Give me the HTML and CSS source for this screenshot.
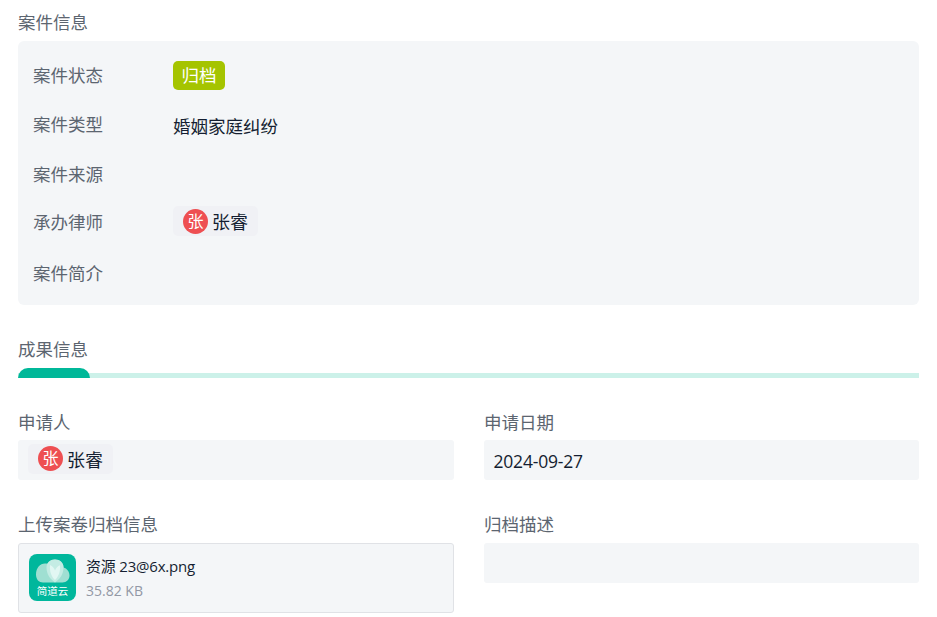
FILE: index.html
```html
<!DOCTYPE html>
<html lang="zh-CN">
<head>
    <meta charset="UTF-8">
    <title>案件信息</title>
    <link rel="stylesheet" href="styles.css">
</head>
<body>
<section class="case-section">
    <h2 class="section-title">案件信息</h2>
    <div class="case-panel">
        <div class="case-row">
            <span class="case-label label-up">案件状态</span>
            <span class="status-tag">归档</span>
        </div>
        <div class="case-row">
            <span class="case-label label-up">案件类型</span>
            <span class="case-value">婚姻家庭纠纷</span>
        </div>
        <div class="case-row">
            <span class="case-label">案件来源</span>
        </div>
        <div class="case-row">
            <span class="case-label label-up">承办律师</span>
            <span class="user-chip">
                <span class="user-avatar">张</span>
                <span class="user-name">张睿</span>
            </span>
        </div>
        <div class="case-row">
            <span class="case-label label-down">案件简介</span>
        </div>
    </div>
</section>

<section class="result-section">
    <h2 class="section-title">成果信息</h2>
    <div class="progress-track">
        <div class="progress-active"></div>
    </div>
    <div class="form-grid">
        <div class="form-item">
            <div class="form-label">申请人</div>
            <div class="form-box">
                <span class="user-chip">
                    <span class="user-avatar">张</span>
                    <span class="user-name">张睿</span>
                </span>
            </div>
        </div>
        <div class="form-item">
            <div class="form-label">申请日期</div>
            <div class="form-box date-box">2024-09-27</div>
        </div>
        <div class="form-item">
            <div class="form-label label-wide">上传案卷归档信息</div>
            <div class="file-card">
                <div class="file-logo">
                    <svg class="logo-cloud" width="34" height="26" viewBox="0 0 34 26">
                        <path d="M7 24.500C3 24.500 0 21.500 0 16.500 0 10 4 5.500 9 5.500 9.800 5.500 10.500 5.600 11.300 5.800 12.800 3.200 15.500 1.500 19 1.500 24 1.500 27.500 5 27.500 9.500 31 10.500 33.500 13.500 33.500 17.500 33.500 21.500 30.500 24.500 26.500 24.500Z" fill="#9fdfd2"/>
                        <path d="M19 24.500C14 21 10.500 16 10.500 9.500 10.500 5 14 1.500 19 1.500 24 1.500 27.500 5 27.500 9.500 27.500 16 24 21 19 24.500Z" fill="#c4ece4"/>
                        <path d="M19 22C15.500 18.500 13.500 14 14 7 16.500 8 18.200 10 19 12.500 20 10 21.800 8 24 7.200 24.500 14 22.500 18.500 19 22Z" fill="#e2f7f3"/>
                    </svg>
                    <span class="logo-text">简道云</span>
                </div>
                <div class="file-info">
                    <div class="file-name">资源 23@6x.png</div>
                    <div class="file-size">35.82 KB</div>
                </div>
            </div>
        </div>
        <div class="form-item">
            <div class="form-label label-wide">归档描述</div>
            <div class="form-box"></div>
        </div>
    </div>
</section>
</body>
</html>
```

FILE: styles.css
```css
* {
    margin: 0;
    padding: 0;
    box-sizing: border-box;
}
body {
    background: #ffffff;
    color: #141e31;
    font-family: "Open Sans", "Noto Sans CJK SC", sans-serif;
    font-size: 17.5px;
    padding: 9px 18px 0;
    overflow: hidden;
}
.section-title {
    color: #5c6570;
    font-size: 17.5px;
    font-weight: normal;
    line-height: 26px;
}
.case-panel {
    background: #f4f6f8;
    border-radius: 6px;
    margin-top: 6px;
    padding: 10px 15px 9px;
}
.case-row {
    display: flex;
    align-items: center;
    height: 49px;
}
.case-label {
    color: #5c6570;
    width: 140px;
    flex-shrink: 0;
}
.label-up {
    margin-top: -2px;
}
.label-down {
    margin-top: 2px;
}
.case-value {
    margin-top: 2px;
}
.status-tag {
    background: #a5c400;
    color: #ffffff;
    border-radius: 5px;
    height: 29px;
    line-height: 29px;
    padding: 0 8.500px;
}
.user-chip {
    display: inline-flex;
    align-items: center;
    background: #f0f1f5;
    border-radius: 5px;
    height: 30px;
    margin-top: -3px;
    padding: 0 10px 0 10px;
    gap: 4px;
}
.user-avatar {
    background: #ee4f52;
    color: #ffffff;
    border-radius: 50%;
    width: 25px;
    height: 25px;
    line-height: 25px;
    text-align: center;
    font-size: 16px;
}
.user-name {
    font-size: 18px;
}
.result-section {
    margin-top: 31px;
}
.progress-track {
    background: #ccf1e9;
    height: 10px;
    margin-top: 6px;
    background-clip: content-box;
    padding-top: 5px;
    position: relative;
}
.progress-active {
    background: #00b899;
    border-radius: 10px 10px 0 0;
    width: 72px;
    height: 10px;
    position: absolute;
    left: 0;
    top: 0;
}
.form-grid {
    display: grid;
    grid-template-columns: 436px 435px;
    column-gap: 30px;
    margin-top: 31px;
}
.form-item {
    min-height: 102px;
}
.form-label {
    color: #5c6570;
    line-height: 26px;
    margin-bottom: 5px;
}
.label-wide {
    margin-bottom: 6px;
}
.form-box {
    background: #f4f6f8;
    border-radius: 3px;
    height: 40px;
    padding-left: 10px;
    display: flex;
    align-items: center;
}
.date-box {
    padding-left: 9.500px;
    padding-top: 2px;
    letter-spacing: -0.2px;
}
.file-card {
    background: #f4f6f8;
    border: 1px solid #e0e2e6;
    border-radius: 3px;
    height: 70px;
    padding: 10px;
    display: flex;
    align-items: flex-start;
    gap: 10px;
}
.file-logo {
    background: #00b79c;
    border-radius: 8px;
    width: 47px;
    height: 47px;
    flex-shrink: 0;
    display: flex;
    flex-direction: column;
    align-items: center;
    padding-top: 4px;
}
.logo-cloud {
    display: block;
}
.logo-text {
    color: #ffffff;
    font-size: 10.500px;
    line-height: 12px;
    margin-top: 1px;
    white-space: nowrap;
}
.file-info {
    font-size: 14px;
    padding-top: 1px;
}
.file-name {
    color: #141e31;
    font-size: 15px;
    letter-spacing: -0.2px;
    line-height: 22px;
    margin-bottom: 3px;
}
.file-size {
    color: #9298a5;
    line-height: 22px;
}
```
